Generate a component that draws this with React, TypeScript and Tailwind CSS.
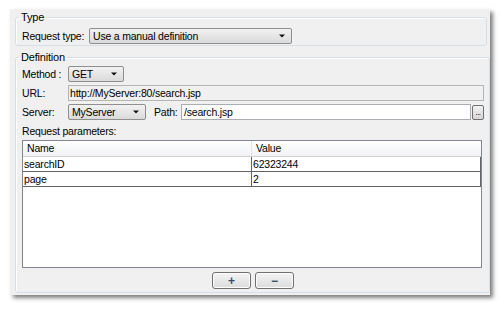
import React from "react";

const font = { fontFamily: "'Liberation Sans', Arial, sans-serif" };

function Arrow() {
  return (
    <svg width="6" height="4" viewBox="0 0 6 4" className="block">
      <path d="M0 0.5H6L3 3.5Z" fill="#111" />
    </svg>
  );
}

function Combo({ text, w }: { text: string; w: string }) {
  return (
    <div
      className={`${w} shrink-0 h-[16px] flex items-center justify-between border border-[#8e8f8f] rounded-[2px] bg-gradient-to-b from-[#f2f2f2] to-[#dadada] pl-[3px] pr-[6px]`}
    >
      <span className="leading-[14px] whitespace-nowrap">{text}</span>
      <Arrow />
    </div>
  );
}

function Btn({ children }: { children: React.ReactNode }) {
  return (
    <div className="w-[39px] h-[17px] flex items-center justify-center border border-[#707070] rounded-[3px] bg-gradient-to-b from-[#f4f4f4] to-[#dcdcdc] text-[#3c4a66] font-bold text-[12px] leading-none shadow-[inset_0_0_0_1px_#fcfcfc]">
      {children}
    </div>
  );
}

export default function App() {
  return (
    <div
      className="w-[501px] h-[309px] bg-white pt-[9px] pl-[10px] text-[10.5px] tracking-[-0.2px] text-black"
      style={font}
    >
      <div className="w-[480px] h-[286px] bg-[#f0f0f0] shadow-[3px_3px_4px_rgba(0,0,0,0.5)] pl-[5px]">
        <fieldset className="w-[472px] border border-[#d5dfe5] rounded-[3px] px-[6px] pb-[1px] shadow-[inset_1px_1px_0_#fff]">
          <legend className="-ml-[3px] px-[2px] leading-[16px] text-[11px]">Type</legend>
          <div className="mt-[3px] flex items-center h-[16px]">
            <span className="w-[67px] shrink-0 whitespace-nowrap leading-[16px]">Request type:</span>
            <Combo text="Use a manual definition" w="w-[203px]" />
          </div>
        </fieldset>

        <fieldset className="mt-[3px] w-[472px] border border-[#d5dfe5] rounded-[3px] pl-[6px] pr-[5px] pb-[3px] shadow-[inset_1px_1px_0_#fff]">
          <legend className="-ml-[3px] px-[2px] leading-[16px] text-[11px]">Definition</legend>
          <div className="mt-[1px] flex items-center h-[16px]">
            <span className="w-[46px] shrink-0 whitespace-nowrap leading-[16px]">Method :</span>
            <Combo text="GET" w="w-[56px]" />
          </div>
          <div className="mt-[3px] flex items-center h-[16px]">
            <span className="w-[46px] shrink-0 whitespace-nowrap leading-[16px]">URL:</span>
            <div className="flex-1 h-[16px] border border-[#b5b5b5] bg-[#f0f0f0] pl-[1px] leading-[14px] whitespace-nowrap">
              http://MyServer:80/search.jsp
            </div>
          </div>
          <div className="mt-[3px] flex items-center h-[16px]">
            <span className="w-[46px] shrink-0 whitespace-nowrap leading-[16px]">Server:</span>
            <Combo text="MyServer" w="w-[78px]" />
            <span className="ml-[8px] w-[27px] shrink-0 whitespace-nowrap leading-[16px]">Path:</span>
            <div className="w-[290px] shrink-0 h-[16px] border border-[#abadb3] bg-white pl-[2px] leading-[14px] whitespace-nowrap">
              /search.jsp
            </div>
            <div className="ml-[1px] w-[12px] shrink-0 h-[15px] border border-[#707070] rounded-[2px] bg-gradient-to-b from-[#f2f2f2] to-[#d6d6d6] flex items-end justify-center pb-[2px]">
              <span className="text-[8px] leading-none tracking-[-0.5px]">...</span>
            </div>
          </div>
          <div className="mt-[3px] h-[16px] leading-[16px] whitespace-nowrap">Request parameters:</div>
          <div className="mt-[1px] w-[460px] h-[128px] border border-[#828790] bg-white flex flex-col">
            <div className="flex h-[16px] border-b border-[#d0d0d0] bg-gradient-to-b from-[#ffffff] to-[#f1f2f4]">
              <div className="w-[229px] pl-[4px] leading-[15px] border-r border-[#e3e4e6]">Name</div>
              <div className="flex-1 pl-[4px] leading-[15px]">Value</div>
            </div>
            {[
              ["searchID", "62323244"],
              ["page", "2"],
            ].map(([n, v]) => (
              <div key={n} className="flex h-[15px] border-b border-[#646464]">
                <div className="w-[229px] pl-[1px] leading-[14px] border-r border-[#646464]">{n}</div>
                <div className="flex-1 pl-[1px] leading-[14px] border-r border-[#646464]">{v}</div>
              </div>
            ))}
          </div>
          <div className="mt-[4px] flex justify-center gap-[4px]">
            <Btn>+</Btn>
            <Btn>−</Btn>
          </div>
        </fieldset>
      </div>
    </div>
  );
}
